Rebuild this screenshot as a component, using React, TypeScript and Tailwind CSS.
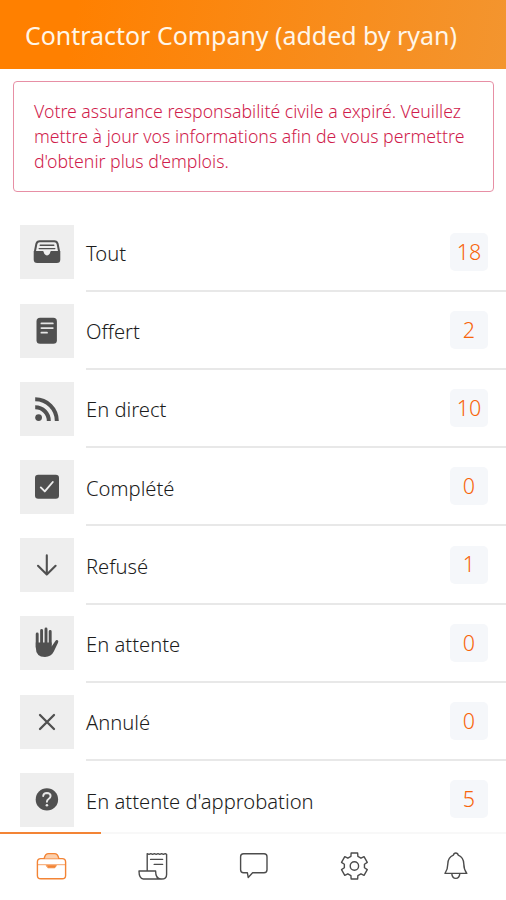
import type { ReactNode } from "react";

const INK = "#505050";

function BoxIcon({ children }: { children: ReactNode }) {
  return (
    <svg viewBox="0 0 54 54" className="size-[54px] shrink-0 bg-[#eeeeee]" fill="none" strokeLinecap="round" strokeLinejoin="round">
      {children}
    </svg>
  );
}

const inbox = (
  <>
    <path d="M15 26 16.4 18.8Q17 16.2 19.8 16.2H34.2Q37 16.2 37.6 18.8L39 26" stroke={INK} strokeWidth="2" />
    <path d="M20.2 20.2H33.8M19.2 23.6H34.8" stroke={INK} strokeWidth="1.4" />
    <path d="M13.7 26H23.4Q24 29.4 27 29.4T30.6 26H40.3V34.5Q40.3 38 36.8 38H17.2Q13.7 38 13.7 34.5Z" fill={INK} />
    <path d="M23.6 25.8H30.4Q29.8 30.4 27 30.4T23.6 25.8Z" fill="#eeeeee" />
  </>
);
const note = (
  <>
    <rect x="16.5" y="13.8" width="20.4" height="26" rx="3.6" fill={INK} />
    <path d="M21.4 19.4H32.8M21.4 24.1H32.8M21.4 28.7H27" stroke="#e6e6e6" strokeWidth="1.8" />
  </>
);
const feed = (
  <>
    <circle cx="18.6" cy="35.6" r="3.4" fill={INK} />
    <path d="M15.2 25.3A13.6 13.6 0 0 1 28.8 38.9M15.2 17.3A21.6 21.6 0 0 1 36.8 38.9" stroke={INK} strokeWidth="4" strokeLinecap="butt" />
  </>
);
const check = (
  <>
    <rect x="15" y="14.8" width="24" height="24" rx="3.2" fill={INK} />
    <path d="M20.8 27.4 24.8 31.4 32.8 22" stroke="#eeeeee" strokeWidth="1.9" />
  </>
);
const arrow = <path d="M26.8 17.4V36.4M18 27.8 26.8 36.6 35.6 27.8" stroke={INK} strokeWidth="2.1" />;
const hand = (
  <>
    <path d="M17.2 18V31M21.6 14.4V29M26 13V28M30.2 15.4V29" stroke={INK} strokeWidth="2.9" />
    <path d="M15.8 26.4H31.6V30.4L35.2 25.2Q36.3 23.6 37.7 24.3 38.8 25 38 26.8L33.8 35.6Q31.2 41 25 41 15.8 41 15.8 31.5Z" fill={INK} />
  </>
);
const cross = <path d="M20 20 34 34M34 20 20 34" stroke={INK} strokeWidth="2.3" />;
const question = (
  <>
    <circle cx="26.9" cy="26.4" r="11.2" fill={INK} />
    <path d="M23.2 23Q23.4 20 26.9 20 30.6 20.2 30.6 23.1 30.6 24.8 28.6 26 26.9 27.1 26.9 28.8" stroke="#e8e8e8" strokeWidth="1.9" />
    <circle cx="26.9" cy="32.2" r="1.3" fill="#e8e8e8" />
  </>
);

const rows: { label: string; count: number; icon: ReactNode }[] = [
  { label: "Tout", count: 18, icon: inbox },
  { label: "Offert", count: 2, icon: note },
  { label: "En direct", count: 10, icon: feed },
  { label: "Complété", count: 0, icon: check },
  { label: "Refusé", count: 1, icon: arrow },
  { label: "En attente", count: 0, icon: hand },
  { label: "Annulé", count: 0, icon: cross },
  { label: "En attente d'approbation", count: 5, icon: question },
];

// Outline of a cog with six evenly spaced teeth around (20.4, 20).
function cogPath() {
  const points: string[] = [];
  for (let i = 0; i < 6; i++) {
    const corners: [number, number][] = [
      [-20, 10.2],
      [-14, 13.4],
      [14, 13.4],
      [20, 10.2],
    ];
    for (const [offset, r] of corners) {
      const a = ((i * 60 + offset - 90) * Math.PI) / 180;
      points.push(`${(20.4 + r * Math.cos(a)).toFixed(2)} ${(20 + r * Math.sin(a)).toFixed(2)}`);
    }
  }
  return `M${points.join("L")}Z`;
}

const tabs: { name: string; drawing: ReactNode }[] = [
  {
    name: "jobs",
    drawing: (
      <>
        <rect x="6.4" y="12.6" width="28.2" height="20.2" rx="3.4" />
        <path d="M13.2 12.4Q14.2 7.6 17.6 7.6H23.4Q26.8 7.6 27.8 12.4" fill="#fbd0ae" />
        <path d="M6.6 18.7H34.4" strokeWidth="1.2" strokeOpacity="0.6" />
        <path d="M15.6 19.6H25.4L23.8 21.8H17.2Z" fill="currentColor" strokeWidth="0.8" />
      </>
    ),
  },
  {
    name: "invoices",
    drawing: (
      <>
        <path d="M15.2 24.6V7.6L17 8.4 18.8 7.6 20.6 8.4 22.4 7.6 24.2 8.4 26 7.6 27.8 8.4 29.6 7.6 31.4 8.4 33.2 7.6 34.6 8.4V28.4Q34.6 33 29.6 33H11.4Q7 32.6 7 25H23.6Q23.6 33 29 33" />
        <path d="M18.6 13.4H30.6M22.2 18.4H30.6" />
      </>
    ),
  },
  {
    name: "messages",
    drawing: <path d="M10.6 7.8H31Q34 7.8 34 10.8V23.8Q34 26.8 31 26.8H19.6L15.2 31.4 14.4 26.8H10.6Q7.6 26.8 7.6 23.8V10.8Q7.6 7.8 10.6 7.8Z" />,
  },
  {
    name: "settings",
    drawing: (
      <>
        <path d={cogPath()} />
        <circle cx="20.4" cy="20" r="4.2" />
      </>
    ),
  },
  {
    name: "alerts",
    drawing: (
      <path d="M10 27.4Q12.8 23.4 12.8 18 13 11.4 18.4 9.2 18.8 7 20.8 7T23.2 9.2Q28.6 11.4 28.8 18 28.8 23.4 31.8 27.4ZM16.8 27.6Q17.2 32.4 20.8 32.4T24.8 27.6" />
    ),
  },
];

export default function App() {
  return (
    <div className="flex h-[900px] w-[506px] flex-col overflow-hidden bg-white font-['Noto_Sans','Open_Sans',sans-serif]">
      <header className="flex h-[69px] shrink-0 items-center bg-linear-[100deg,#ff8000_15%,#f3952f] pt-[3px] pl-[25px]">
        <h1 className="text-[24.95px] whitespace-nowrap text-[#fff6e8]">Contractor Company (added by ryan)</h1>
      </header>

      <div className="mt-3 mr-3 ml-[13px] h-[111px] shrink-0 rounded-[4px] border border-[#e78fa5] pt-[17px] pl-[20px] text-[17.7px] leading-[25px] font-light whitespace-nowrap text-[#d01c4c]">
        <p>Votre assurance responsabilité civile a expiré. Veuillez</p>
        <p>mettre à jour vos informations afin de vous permettre</p>
        <p>d'obtenir plus d'emplois.</p>
      </div>

      <main className="mt-[21.6px] min-h-0 flex-1 overflow-hidden pl-5">
        {rows.map((row) => (
          <div key={row.label} className="flex h-[78.22px] gap-3">
            <div className="pt-[11.8px]">
              <BoxIcon>{row.icon}</BoxIcon>
            </div>
            <div className="flex flex-1 items-center justify-between border-b-2 border-[#e8e8e8] pr-[18px]">
              <span className="pt-[3px] text-[20.2px] font-light whitespace-nowrap text-[#1c1c1c]">{row.label}</span>
              <span className="flex h-[38px] w-[38px] items-center justify-center rounded-[5px] bg-[#f5f7fa] text-[21.5px] font-light text-[#f8650a]">{row.count}</span>
            </div>
          </div>
        ))}
      </main>

      <nav className="grid h-[68px] shrink-0 grid-cols-5">
        {tabs.map((tab, i) => (
          <div key={tab.name} className={i === 0 ? "flex justify-center border-t-2 border-[#f38435] pt-3" : "flex justify-center border-t-2 border-[#f8f8f8] pt-3"}>
            <svg viewBox="0 0 40 40" className={i === 0 ? "size-10 text-[#f38435]" : "size-10 text-[#4c4c4c]"} fill="none" stroke="currentColor" strokeWidth="1.4" strokeLinecap="round" strokeLinejoin="round">
              {tab.drawing}
            </svg>
          </div>
        ))}
      </nav>
    </div>
  );
}
